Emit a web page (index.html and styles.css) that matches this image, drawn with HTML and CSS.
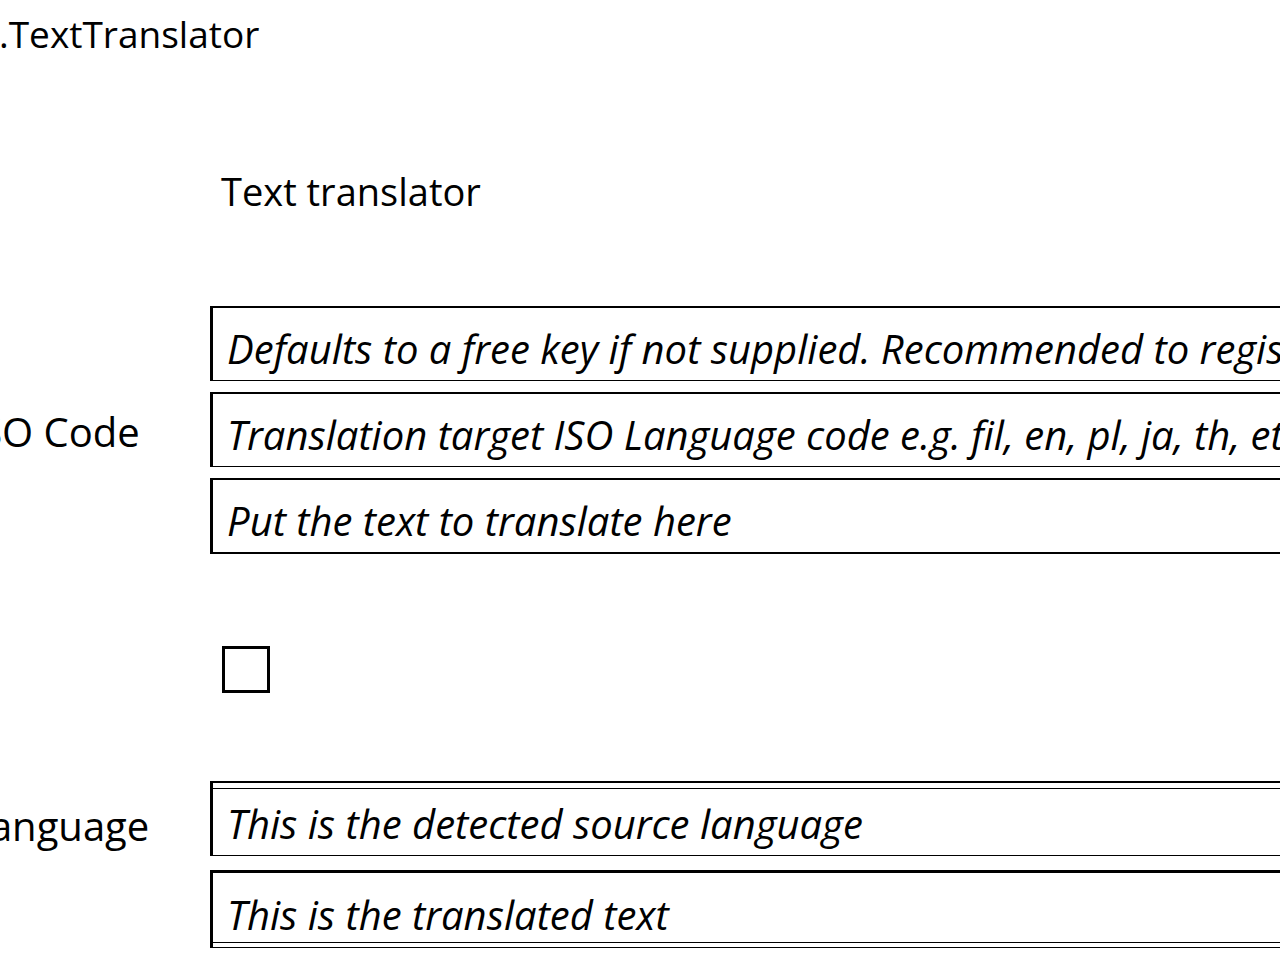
FILE: index.html
```html
<!DOCTYPE html>
<html lang="en">
<head>
<meta charset="utf-8">
<title>TextTranslator</title>
<link rel="stylesheet" href="styles.css">
</head>
<body>
<div class="page">
  <div class="app-title">.TextTranslator</div>
  <h2 class="form-title">Text translator</h2>
  <div class="form">
    <div class="row row-1">
      <div class="label"></div>
      <div class="field"><span class="ph">Defaults to a free key if not supplied. Recommended to register for your own key</span></div>
    </div>
    <div class="row row-2">
      <div class="label">ISO Code</div>
      <div class="field"><span class="ph">Translation target ISO Language code e.g. fil, en, pl, ja, th, etc</span></div>
    </div>
    <div class="row row-3">
      <div class="label"></div>
      <div class="field field-last"><span class="ph">Put the text to translate here</span></div>
    </div>
    <div class="row row-check">
      <div class="label"></div>
      <div class="check-wrap"><span class="checkbox"></span></div>
    </div>
    <div class="row row-5">
      <div class="label">Language</div>
      <div class="field field-out"><span class="ph">This is the detected source language</span></div>
    </div>
    <div class="row row-6">
      <div class="label"></div>
      <div class="field field-out2"><span class="ph">This is the translated text</span></div>
    </div>
  </div>
</div>
</body>
</html>
```
FILE: styles.css
```css
html, body {
  margin: 0;
  padding: 0;
  background: #fff;
  overflow: hidden;
}
body {
  width: 1280px;
  height: 960px;
  font-family: "Open Sans", "Noto Sans", sans-serif;
  color: #000;
}
.page {
  margin-left: -31px;
  width: 1400px;
}
.app-title {
  font-size: 37px;
  line-height: 40px;
  padding-top: 14px;
  margin-left: 30px;
}
.form-title {
  font-size: 38px;
  font-weight: 400;
  line-height: 40px;
  margin: 117px 0 0 252px;
}
.form {
  display: flex;
  flex-direction: column;
  margin-top: 95px;
}
.row {
  display: flex;
  align-items: center;
}
.label {
  width: 241px;
  flex: none;
  font-size: 40px;
  padding-top: 4px;
}
.field {
  flex: 1;
  height: 63px;
  padding-top: 9px;
  border-top: 2px solid #000;
  border-left: 3px solid #000;
  border-bottom: 1px solid #000;
  display: flex;
  align-items: center;
  padding-left: 14px;
  white-space: nowrap;
  overflow: hidden;
}
.ph {
  font-style: italic;
  font-size: 40px;
}
.row-2 { margin-top: 11px; }
.row-3 { margin-top: 11px; }
.field-last { border-bottom-width: 2px; }
.row-check { margin-top: 92px; }
.check-wrap { padding-left: 12px; }
.checkbox {
  display: block;
  width: 42px;
  height: 41px;
  border: 3px solid #000;
}
.row-5 { margin-top: 88px; }
.row-5 .label { padding-top: 14px; }
.field-out {
  height: 63px;
  border-top-width: 2px;
  box-shadow: inset 0 5px 0 #fff, inset 0 6px 0 #000;
}
.row-6 { margin-top: 14px; }
.field-out2 {
  height: 65px;
  border-top-width: 3px;
  box-shadow: inset 0 -4px 0 #fff, inset 0 -5px 0 #000;
}
```
